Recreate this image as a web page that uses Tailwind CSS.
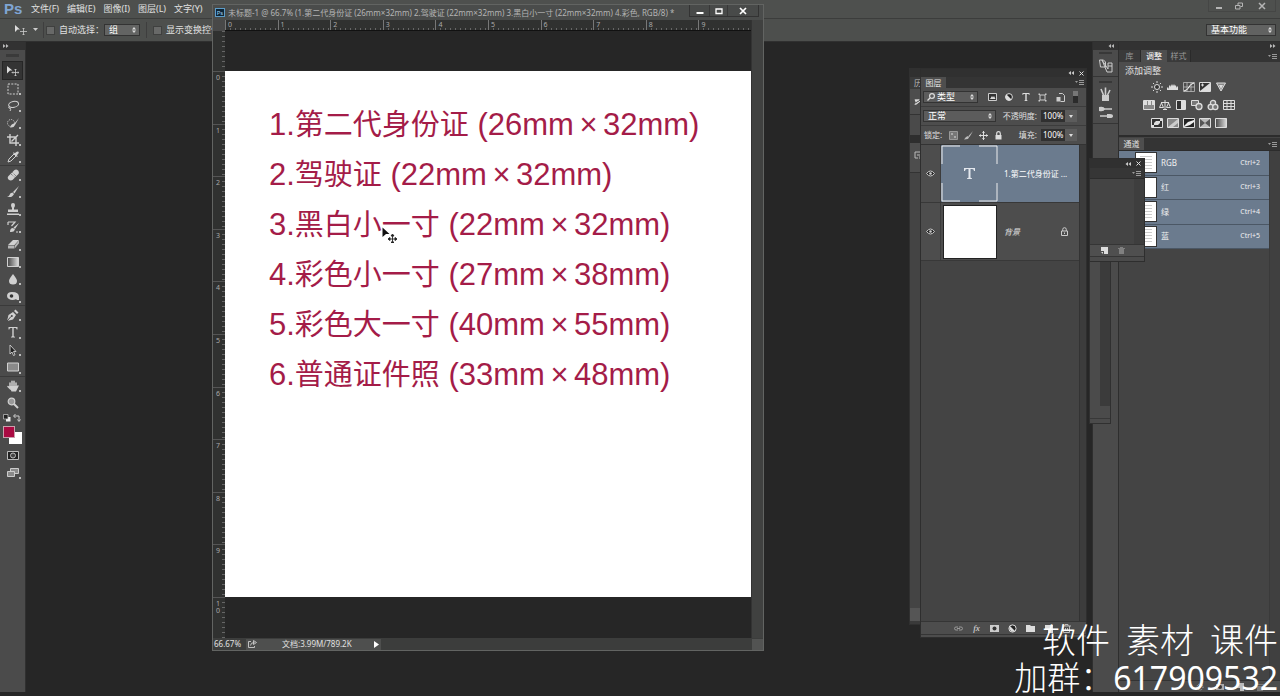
<!DOCTYPE html>
<html lang="zh-CN">
<head>
<meta charset="utf-8">
<title>Ps</title>
<script src="https://cdn.jsdelivr.net/npm/@tailwindcss/browser@4"></script>
</head>
<body class="h-screen overflow-hidden bg-[#262626] font-['Noto_Sans','Noto_Sans_CJK_SC',sans-serif] text-[9px] leading-3 text-[#e0e0e0]">
<div class="relative flex h-screen flex-col overflow-hidden">

  <!-- menu bar -->
  <header class="flex h-[18px] shrink-0 items-center bg-[#4e504e] pl-1">
    <span class="w-[27px] font-['Liberation_Sans',sans-serif] text-[15px] leading-4 font-bold text-[#7fa5d3]">Ps</span>
    <nav class="flex gap-2 whitespace-nowrap">
      <a href="#">文件(F)</a><a href="#">编辑(E)</a><a href="#">图像(I)</a><a href="#">图层(L)</a><a href="#">文字(Y)</a>
    </nav>
    <div class="mr-1 ml-auto flex h-3 self-start border border-t-0 border-[#454645] text-[#b5b5b5]">
      <button aria-label="最小化" class="flex w-5 items-center justify-center"><svg class="size-2" viewBox="0 0 8 8"><path d="M1 5h6v2H1z" fill="currentColor"/></svg></button>
      <button aria-label="还原" class="flex w-5 items-center justify-center"><svg class="size-2" viewBox="0 0 8 8" fill="none" stroke="currentColor"><path d="M3 3V1h4.500v3.500H5.500M.5 3.500h4.500v3.500H.5z"/></svg></button>
      <button aria-label="关闭" class="flex w-[26px] items-center justify-center"><svg class="size-2" viewBox="0 0 8 8" stroke="currentColor" stroke-width="1.500"><path d="M1 1l6 6M7 1L1 7"/></svg></button>
    </div>
  </header>

  <!-- options bar -->
  <div class="flex h-6 shrink-0 items-center border-y border-t-[#3c3d3c] border-b-[#303030] bg-[#4d4f4d] pl-[15px]">
    <svg class="h-3 w-3" viewBox="0 0 12 12"><path d="M0 1l5 4.500H2.500L0 8z" fill="#ddd"/><path d="M8.500 4v7M5 7.500h7M7.500 5l1-1 1 1M7.500 10l1 1 1-1" stroke="#ccc" stroke-width=".8" fill="none"/></svg>
    <svg class="ml-1.5 h-1 w-1.5" viewBox="0 0 6 4"><path d="M0 0h5L2.500 3z" fill="#ccc"/></svg>
    <i class="ml-1 h-4 w-px bg-[#3e3e3e]"></i>
    <label class="ml-0.5 flex items-center gap-1 whitespace-nowrap"><input type="checkbox" class="size-[9px] appearance-none border border-[#3f403f] bg-[#686968]">自动选择：</label>
    <div class="relative flex">
      <select aria-label="自动选择" class="h-3 w-9 appearance-none border border-[#333] bg-[#636463] pl-1 text-[9px] leading-[10px] text-white"><option>组</option></select>
      <svg class="absolute top-[3px] right-1 h-1.5 w-1" viewBox="0 0 4 6"><path d="M0 2.500L2 0l2 2.500zM0 3.500L2 6l2-2.500z" fill="#ddd"/></svg>
    </div>
    <i class="ml-1.5 h-4 w-px bg-[#3e3e3e]"></i>
    <label class="ml-1.5 flex items-center gap-1 whitespace-nowrap"><input type="checkbox" class="size-[9px] appearance-none border border-[#3f403f] bg-[#686968]">显示变换控件</label>
    <div class="relative mr-1 ml-auto flex">
      <select aria-label="工作区" class="h-3 w-[70px] appearance-none border border-[#333] bg-[#616261] pl-1 text-[9px] leading-[10px] text-white"><option>基本功能</option></select>
      <svg class="absolute top-[3px] right-1 h-1.5 w-1" viewBox="0 0 4 6"><path d="M0 2.500L2 0l2 2.500zM0 3.500L2 6l2-2.500z" fill="#ddd"/></svg>
    </div>
  </div>

  <!-- workspace -->
  <main class="flex min-h-0 flex-1">
    <!-- tools -->
    <aside class="mb-1 flex w-[26px] shrink-0 flex-col border-r border-[#303030] bg-[#4b4b4b]">
      <div class="flex h-2 items-center bg-[#323232] pl-[3px]"><svg class="h-1 w-1.5" viewBox="0 0 6 4" fill="#bbb"><path d="M0 0l2.500 2L0 4zM3 0l2.500 2L3 4z"/></svg></div>
      <div class="mx-1.5 my-1 h-[3px] bg-[#3a3a3a]"></div>
      <div class="flex h-[105px] shrink-0 flex-col border-b border-[#3a3a3a] text-[#d0d0d0] *:flex-1 *:bg-[radial-gradient(circle_at_20px_14px,#bbb_0_1px,transparent_1px)] *:pl-[7px]">
        <button aria-label="移动" class="mx-0.5 border border-[#262626] !bg-[#343434] !pl-1"><svg class="size-3" viewBox="0 0 12 12"><path d="M0 1l5.500 4.500H3L0 8.500z" fill="#ddd"/><path d="M8.500 4v7M5 7.500h7M7.500 5l1-1 1 1M7.500 10l1 1 1-1M6 6.500l-1 1 1 1M11 6.500l1 1-1 1" stroke="#ccc" stroke-width=".8" fill="none"/></svg></button>
        <button aria-label="选框"><svg class="size-3" viewBox="0 0 12 12"><path d="M1 1h10v10H1z" fill="none" stroke="currentColor" stroke-dasharray="2 1.300"/></svg></button>
        <button aria-label="套索"><svg class="size-3" viewBox="0 0 12 12" fill="none" stroke="currentColor"><ellipse cx="6.500" cy="4.500" rx="5" ry="3" transform="rotate(-12 6 4)"/><path d="M2 6.500q-1 2 1.500 2 .5 1-.5 2.500"/></svg></button>
        <button aria-label="快速选择"><svg class="size-3" viewBox="0 0 12 12"><circle cx="4" cy="6" r="3.500" fill="none" stroke="currentColor" stroke-dasharray="1 1"/><path d="M12 1L7 7l1 1zM7 6.500Q4 7 3 10.500q4 .5 5-2.500z" fill="currentColor"/></svg></button>
        <button aria-label="裁剪"><svg class="size-3" viewBox="0 0 12 12"><path d="M3 0v9h9M0 3h9v9M4.500 7.500L11 1" fill="none" stroke="currentColor" stroke-width="1.400"/></svg></button>
        <button aria-label="吸管"><svg class="size-3" viewBox="0 0 12 12"><path d="M1 11l1-3 5-5 2 2-5 5z" fill="none" stroke="currentColor"/><path d="M6 2l4 4 .8-.8-1-1Q12.500 2 11.500.8 10 0 7.800 2.200l-1-1z" fill="currentColor"/></svg></button>
      </div>
      <div class="flex h-[140px] shrink-0 flex-col border-b border-[#3a3a3a] text-[#d0d0d0] *:flex-1 *:bg-[radial-gradient(circle_at_20px_14px,#bbb_0_1px,transparent_1px)] *:pl-[7px]">
        <button aria-label="修复"><svg class="size-3" viewBox="0 0 12 12"><path d="M1.500 10.500q-1.500-2 0-3.500l6-6q2-1 3.500.5t.5 3.500l-6 6q-2 1-4-.5z" fill="currentColor"/><path d="M4 5l3.500 3M5.500 3.500L9 7" stroke="#666" stroke-dasharray="1 1"/></svg></button>
        <button aria-label="画笔"><svg class="size-3" viewBox="0 0 12 12"><path d="M12 0L6 6l1.500 1.500zM5.500 6.500Q3 6.500 2.500 9 2 10.500 0 10.500q5 2 7-2.500z" fill="currentColor"/></svg></button>
        <button aria-label="图章"><svg class="size-3" viewBox="0 0 12 12"><path d="M4 2q0-2 2-2t2 2q0 1.500-1 3v1.500h4V9H1V6.500h4V5Q4 3.500 4 2zM0 10.500h12V12H0z" fill="currentColor"/></svg></button>
        <button aria-label="历史画笔"><svg class="size-3" viewBox="0 0 12 12"><path d="M12 2L6.500 6.500 8 8zM6 7Q3 7 3 11q4 .5 5-2.500z" fill="currentColor"/><path d="M1 1h7L4.500 5M1 1v3M9 11h2" fill="none" stroke="currentColor" stroke-width="1.200"/></svg></button>
        <button aria-label="橡皮擦"><svg class="size-3" viewBox="0 0 12 12"><path d="M1 7l5-5h6L7.500 7z" fill="currentColor"/><path d="M1 7.500h6.500v3H1zM8 7.300l4-5v3l-4 5z" fill="#b4b4b4"/></svg></button>
        <button aria-label="渐变"><svg class="size-3" viewBox="0 0 12 12"><defs><linearGradient id="g1"><stop stop-color="#444"/><stop offset="1" stop-color="#ddd"/></linearGradient></defs><path d="M.5 1.500h11v9H.5z" fill="url(#g1)" stroke="currentColor"/></svg></button>
        <button aria-label="模糊"><svg class="size-3" viewBox="0 0 12 12"><path d="M6 1q4 5 4 7a4 3.500 0 0 1-8 0Q2 6 6 1z" fill="currentColor"/></svg></button>
        <button aria-label="减淡"><svg class="size-3" viewBox="0 0 12 12"><path d="M0 6q0-4 5-4 7 0 7 5v3H9.500V9Q5 11 2 9 0 8 0 6z" fill="currentColor"/><circle cx="4.500" cy="6" r="1.800" fill="#333"/></svg></button>
      </div>
      <div class="flex h-[71px] shrink-0 flex-col border-b border-[#3a3a3a] text-[#d0d0d0] *:flex-1 *:bg-[radial-gradient(circle_at_20px_14px,#bbb_0_1px,transparent_1px)] *:pl-[7px]">
        <button aria-label="钢笔"><svg class="size-3" viewBox="0 0 12 12"><path d="M0 12l1.500-6L6 3l3 3-3 4.500zM7 2l1.500-1.500 3 3L10 5z" fill="currentColor"/><path d="M0 12l4-4.500" stroke="#444"/><circle cx="4.800" cy="7" r="1" fill="#444"/></svg></button>
        <button aria-label="文字"><svg class="size-3" viewBox="0 0 12 12"><path d="M1.500 1h9v2.500h-.8Q9.500 2 8.500 2H6.700v8q0 .8 1.300.8v.7H4v-.7q1.300 0 1.300-.8V2H3.500q-1 0-1.200 1.500h-.8z" fill="currentColor"/></svg></button>
        <button aria-label="路径选择"><svg class="size-3" viewBox="0 0 12 12"><path d="M3 1v9l2-2 1.500 3.500 1.500-.7L6.500 7.500H9z" fill="#222" stroke="currentColor" stroke-width=".9"/></svg></button>
        <button aria-label="矩形"><svg class="size-3" viewBox="0 0 12 12"><path d="M.5 2h11v8H.5z" fill="#8a8a8a" stroke="currentColor"/></svg></button>
      </div>
      <div class="flex h-[35px] shrink-0 flex-col text-[#d0d0d0] *:flex-1 *:pl-[7px]">
        <button aria-label="抓手" class="bg-[radial-gradient(circle_at_20px_14px,#bbb_0_1px,transparent_1px)]"><svg class="size-3" viewBox="0 0 12 12"><path d="M3 7V3M5 6V1.300M7 6V1.300M9 7V3M3.500 9L1 6.500" stroke="currentColor" stroke-width="1.500" stroke-linecap="round"/><path d="M2.300 6h7.400l1.500-1 .5 1L9 11.500H4.500z" fill="currentColor"/></svg></button>
        <button aria-label="缩放"><svg class="size-3" viewBox="0 0 12 12"><circle cx="4.500" cy="4.500" r="3.300" fill="#999" stroke="currentColor" stroke-width="1.200"/><path d="M7 7l4 4" stroke="currentColor" stroke-width="2"/></svg></button>
      </div>
      <div class="flex h-3 shrink-0 items-center justify-between px-1 pl-[3px]">
        <svg class="size-2" viewBox="0 0 8 8"><path d="M3 3h4.500v4.500H3z" fill="#eee"/><path d="M.5.5H5V5H.5z" fill="#222" stroke="#ccc" stroke-width=".7"/></svg>
        <svg class="size-2" viewBox="0 0 8 8" fill="none" stroke="#ccc"><path d="M2.500 0L.5 2l2 2M1 2h5v5M4.500 5.500L6 7.500l1.500-2"/></svg>
      </div>
      <div class="grid h-[21px] shrink-0 grid-cols-[3px_6px_6px_7px] grid-rows-[2px_6px_6px_6px]">
        <button aria-label="背景色" class="col-start-3 col-end-5 row-start-3 row-end-5 bg-white"></button>
        <button aria-label="前景色" class="col-start-2 col-end-4 row-start-2 row-end-4 border border-[#c9a0ac] bg-[#aa0a42]"></button>
      </div>
      <button aria-label="快速蒙版" class="mt-0.5 flex h-[17px] shrink-0 items-center pl-[7px]"><svg class="h-[9px] w-3" viewBox="0 0 12 9"><path d="M.5.5h11v8H.5z" fill="#222" stroke="#bbb"/><circle cx="6" cy="4.500" r="2.500" fill="#444" stroke="#bbb"/></svg></button>
      <button aria-label="屏幕模式" class="flex h-[17px] shrink-0 items-center bg-[radial-gradient(circle_at_20px_14px,#bbb_0_1px,transparent_1px)] pl-[7px]"><svg class="h-[9px] w-3" viewBox="0 0 12 9" fill="#8a8a8a" stroke="#ccc"><path d="M3.500.5h8v5h-8z"/><path d="M.5 3.500h7v5h-7z"/></svg></button>
    </aside>

    <div class="flex-1"></div>

    <!-- collapsed icon dock -->
    <aside class="mb-1 flex w-[27px] shrink-0 flex-col border-x border-[#2e2e2e] bg-[#4b4b4b]">
      <div class="flex h-2 shrink-0 items-center justify-end bg-[#323232] pr-1"><svg class="h-1 w-1.5" viewBox="0 0 6 4" fill="#bbb"><path d="M3 0v4L.5 2zM6 0v4L3.500 2z"/></svg></div>
      <div class="mx-1.5 my-0.5 h-0.5 bg-[#383838]"></div>
      <button aria-label="历史记录" class="flex h-[21px] shrink-0 items-center justify-center border-b border-[#353535]"><svg class="size-4" viewBox="0 0 16 16" fill="none" stroke="#ccc"><path d="M1.500 2h4l2 2v5h-5zM4 2l6 9V5h4v9H9z"/><path d="M10 8h4"/></svg></button>
      <div class="mx-1.5 mt-1 mb-0.5 h-0.5 shrink-0 bg-[#383838]"></div>
      <button aria-label="画笔预设" class="flex h-[18px] shrink-0 items-center justify-center"><svg class="size-4" viewBox="0 0 16 16"><path d="M4 9h7v6H4z" fill="#ccc"/><path d="M5.500 9L3 3M7.500 9V1.500M9.500 9L12 4" stroke="#ccc" stroke-width="1.600"/></svg></button>
      <button aria-label="画笔" class="flex h-[21px] shrink-0 items-center justify-center border-b border-[#353535]"><svg class="size-4" viewBox="0 0 16 16"><path d="M1 4h13M2 11h9" stroke="#ccc" stroke-width="1.400"/><path d="M1 2q5-1 6 2-1 3-6 2zM9 9h3q3 0 3 2t-3 2H9z" fill="#ccc"/></svg></button>
    </aside>

    <!-- right panels -->
    <aside class="mb-1 flex w-[161px] shrink-0 flex-col bg-[#444]">
      <div class="flex h-2 shrink-0 items-center justify-end bg-[#323232] pr-1"><svg class="h-1 w-1.5" viewBox="0 0 6 4" fill="#bbb"><path d="M0 0l2.500 2L0 4zM3 0l2.500 2L3 4z"/></svg></div>
      <div class="flex h-3 shrink-0 items-center bg-[#343434] text-[8px] text-[#999]">
        <button class="h-3 w-[22px] border-r border-[#2a2a2a] bg-[#3a3a3a]">库</button>
        <button class="h-3 w-[26px] bg-[#4e4e4e] text-white">调整</button>
        <button class="h-3 w-6 border-r border-[#2a2a2a] bg-[#3a3a3a]">样式</button>
        <svg class="mr-[3px] ml-auto h-[5px] w-[9px]" viewBox="0 0 9 5"><path d="M0 1h3L1.500 3zM4 0h5v1H4zM4 2h5v1H4zM4 4h5v1H4z" fill="#999"/></svg>
      </div>
      <section class="flex h-[75px] shrink-0 flex-col items-center border-b-2 border-[#2c2c2c] bg-[#4d4d4d] pt-[3px]">
        <h2 class="self-start pl-[6px] text-[9px]">添加调整</h2>
        <div class="flex gap-1 pt-1 pr-[21px] *:size-3">
          <svg viewBox="0 0 12 12" stroke="#ddd"><circle cx="6" cy="6" r="2.500" fill="#333"/><path d="M6 0v2M6 10v2M0 6h2M10 6h2M2 2l1.200 1.200M8.800 8.800L10 10M10 2L8.800 3.200M3.200 8.800L2 10"/></svg>
          <svg viewBox="0 0 12 12"><path d="M0 9V7l1-1 1 2V5l1-1 1 2V3l1 2 1-2 1 2V3l1 2 1-1v3l1-2 1 1v3z" fill="#ddd"/></svg>
          <svg viewBox="0 0 12 12" fill="none" stroke="#ccc"><path d="M.5 1.500h11v9H.5zM.5 6h11M4 1.500v9M8 1.500v9" stroke-width=".7"/><path d="M1 10Q5 9 6 6t5-4" stroke="#fff"/></svg>
          <svg viewBox="0 0 12 12"><path d="M.5 1.500h11v9H.5z" fill="#333" stroke="#ddd"/><path d="M1 10l10-8v8z" fill="#ddd"/><path d="M2 4h3M3.500 2.500v3" stroke="#ddd"/></svg>
          <svg viewBox="0 0 12 12"><path d="M1.500 2h9L6 10z" fill="#888" stroke="#ddd"/><path d="M4 4h4L6 8z" fill="#ddd"/></svg>
        </div>
        <div class="flex gap-1 pt-[6px] pr-[21px] *:size-3">
          <svg viewBox="0 0 12 12"><path d="M.5 1.500h11v9H.5z" fill="#888" stroke="#ddd"/><path d="M1 2h3v4H1zM5 2h3v4H5zM9 2h2v4H9z" fill="#ddd"/></svg>
          <svg viewBox="0 0 12 12" fill="none" stroke="#ddd"><path d="M6 1v2M2 3.500h8M2.500 4L.5 8.500h4zM9.500 4l-2 4.500h4zM6 3v7M4 10.500h4"/></svg>
          <svg viewBox="0 0 12 12"><path d="M1.500 1.500h9v9h-9z" fill="#333" stroke="#ddd"/><path d="M6 2h4v8H6z" fill="#ddd"/></svg>
          <svg viewBox="0 0 12 12"><path d="M.5 1.500h7v5h-7z" fill="#777" stroke="#ddd"/><circle cx="8" cy="7.500" r="3" fill="#777" stroke="#ddd" stroke-width="1.300"/></svg>
          <svg viewBox="0 0 12 12" fill="#777" stroke="#ddd" stroke-width="1.300"><circle cx="6" cy="4" r="2.600"/><circle cx="3.700" cy="8" r="2.600"/><circle cx="8.300" cy="8" r="2.600"/></svg>
          <svg viewBox="0 0 12 12" fill="none" stroke="#ddd"><path d="M.5 1.500h11v9H.5zM.5 4.500h11M.5 7.500h11M4 1.500v9M8 1.500v9"/></svg>
        </div>
        <div class="flex gap-1 pt-[6px] pr-[21px] *:size-3">
          <svg viewBox="0 0 12 12"><path d="M.5 1.500h11v9H.5z" fill="#333" stroke="#ddd"/><path d="M1 10h2V6l2-2h6V2H9v4L7 8H1z" fill="#ddd"/></svg>
          <svg viewBox="0 0 12 12"><path d="M.5 1.500h11v9H.5z" fill="#888" stroke="#ddd"/><path d="M1 10l10-8v4L6 10z" fill="#ccc"/></svg>
          <svg viewBox="0 0 12 12"><path d="M.5 1.500h11v9H.5z" fill="#222" stroke="#ddd"/><path d="M1 9l4-4 6-2v2L7 8l-6 2z" fill="#eee"/></svg>
          <svg viewBox="0 0 12 12"><path d="M.5 1.500h11v9H.5z" fill="#555" stroke="#ddd"/><path d="M1 2l5 4 5-4zM1 10l5-4 5 4z" fill="#bbb"/></svg>
          <svg viewBox="0 0 12 12"><path d="M.5 1.500h11v9H.5z" fill="url(#g1)" stroke="#ddd"/></svg>
        </div>
      </section>
      <div class="mt-px flex h-[13px] shrink-0 items-center border-b border-[#2c2c2c] bg-[#343434] text-[8px]">
        <button class="h-3 w-[25px] bg-[#4e4e4e]">通道</button>
        <svg class="mr-[3px] ml-auto h-[5px] w-[9px]" viewBox="0 0 9 5"><path d="M0 1h3L1.500 3zM4 0h5v1H4zM4 2h5v1H4zM4 4h5v1H4z" fill="#999"/></svg>
      </div>
      <div class="flex min-h-0 flex-1">
        <div class="flex-1">
          <ul class="grid h-[98px] grid-rows-4 text-[8px] text-[#f0f0f0] *:flex *:items-center *:border-b *:border-[#4b5765] *:bg-[#6b7b8e] *:pr-[9px] *:pl-4">
            <li><i class="flex h-[21px] w-[22px] border border-[#333] bg-white bg-[repeating-linear-gradient(#ccc_0_1px,#fff_1px_3px)] bg-[length:12px_14px] bg-center bg-no-repeat"></i><b class="ml-1 font-normal">RGB</b><span class="ml-auto text-[7px]">Ctrl+2</span></li>
            <li><i class="flex h-[21px] w-[22px] border border-[#333] bg-white"></i><b class="ml-1 font-normal">红</b><span class="ml-auto text-[7px]">Ctrl+3</span></li>
            <li><i class="flex h-[21px] w-[22px] border border-[#333] bg-white bg-[repeating-linear-gradient(#ccc_0_1px,#fff_1px_3px)] bg-[length:12px_14px] bg-center bg-no-repeat"></i><b class="ml-1 font-normal">绿</b><span class="ml-auto text-[7px]">Ctrl+4</span></li>
            <li><i class="flex h-[21px] w-[22px] border border-[#333] bg-white bg-[repeating-linear-gradient(#ccc_0_1px,#fff_1px_3px)] bg-[length:12px_14px] bg-center bg-no-repeat"></i><b class="ml-1 font-normal">蓝</b><span class="ml-auto text-[7px]">Ctrl+5</span></li>
          </ul>
        </div>
        <div class="w-[11px] border-l border-[#3a3a3a] bg-[#404040]"></div>
      </div>
      <div class="flex h-3 shrink-0 items-center justify-end gap-3 border-t border-[#333] bg-[#4c4c4c] pr-4 *:size-2">
        <svg viewBox="0 0 8 8"><circle cx="4" cy="4" r="3" fill="none" stroke="#bbb" stroke-dasharray="1 1"/></svg>
        <svg viewBox="0 0 8 8"><path d="M0 1h8v6H0z" fill="#aaa"/><circle cx="4" cy="4" r="2" fill="#333"/></svg>
        <svg viewBox="0 0 8 8"><path d="M1 0h7v8H4V5H1z" fill="#bbb"/></svg>
        <svg viewBox="0 0 8 8"><path d="M0 1h8v1H0zM1 3h6v5H1z" fill="#777"/></svg>
      </div>
    </aside>
  </main>

  <!-- document window -->
  <section class="absolute top-1 left-[212px] flex h-[647px] w-[552px] flex-col border border-[#626462] bg-[#454645]">
    <div class="flex h-[15px] shrink-0 items-center bg-[#4a4c4b] pl-0.5">
      <span class="flex h-[9px] w-[10px] items-center justify-center border border-[#5d9cc7] bg-[#0d2538] text-[6px] leading-none text-[#9fd2f5]">Ps</span>
      <h1 class="ml-[3px] text-[8px] whitespace-nowrap text-[#b4b4b4]">未标题-1 @ 66.7% (1.第二代身份证 (26mm×32mm) 2.驾驶证 (22mm×32mm) 3.黑白小一寸 (22mm×32mm) 4.彩色, RGB/8) *</h1>
      <div class="mr-1 ml-auto flex h-3 self-start border border-t-0 border-[#333] bg-[#484a49] text-white">
        <button aria-label="最小化" class="flex w-5 items-center justify-center border-r border-[#383838]"><svg class="size-2" viewBox="0 0 8 8"><path d="M.5 5h7v2h-7z" fill="currentColor"/></svg></button>
        <button aria-label="最大化" class="flex w-[18px] items-center justify-center border-r border-[#383838]"><svg class="size-2" viewBox="0 0 8 8"><path d="M1 2h6v4.500H1z" fill="none" stroke="currentColor" stroke-width="1.300"/></svg></button>
        <button aria-label="关闭" class="flex w-[30px] items-center justify-center"><svg class="size-2" viewBox="0 0 8 8" stroke="currentColor" stroke-width="1.700"><path d="M1 1l6 6M7 1L1 7"/></svg></button>
      </div>
    </div>
    <div class="flex min-h-0 flex-1">
      <!-- vertical ruler -->
      <div class="flex w-3 shrink-0 flex-col bg-[#303130] text-[7px] leading-[7px] text-[#aaa]">
        <div class="h-[11px] shrink-0 bg-[#484848]"></div>
        <div class="h-10 shrink-0 bg-[repeating-linear-gradient(0deg,transparent_0_4px,#666_4px_5px)] bg-[length:3px_100%] bg-right bg-no-repeat"></div>
        <div class="grid h-[526px] shrink-0 grid-rows-10 *:border-t *:border-[#555] *:bg-[repeating-linear-gradient(transparent_0_4px,#666_4px_5px)] *:bg-[length:3px_50px] *:bg-right-top *:bg-no-repeat *:pt-0.5 *:pl-[3px]">
          <span>0</span><span>1</span><span>2</span><span>3</span><span>4</span><span>5</span><span>6</span><span>7</span><span>8</span><span>9</span>
        </div>
        <div class="flex-1 border-t border-[#555] bg-[repeating-linear-gradient(transparent_0_4px,#666_4px_5px)] bg-[length:3px_100%] bg-right bg-no-repeat pt-0.5 pl-[3px]">1<br>0</div>
      </div>
      <div class="flex flex-1 flex-col">
        <!-- horizontal ruler -->
        <div class="grid h-[11px] shrink-0 grid-cols-10 border-b border-[#111] bg-[#303130] text-[7px] leading-[9px] text-[#aaa] *:border-l *:border-[#777] *:bg-[repeating-linear-gradient(90deg,transparent_0_4px,#666_4px_5px)] *:bg-[length:50px_2px] *:bg-left-bottom *:bg-no-repeat *:pl-0.5">
          <span>0</span><span>1</span><span>2</span><span>3</span><span>4</span><span>5</span><span>6</span><span>7</span><span>8</span><span>9</span>
        </div>
        <div class="flex flex-1 flex-col bg-[#262626] pt-10">
          <div class="h-[526px] bg-white pt-[29px] pl-11 font-['Liberation_Sans','Noto_Sans_CJK_SC',sans-serif] text-[31px] leading-[50px] whitespace-nowrap text-[#a41c48]">
            <p>1.<span class="text-[29px]">第二代身份证</span> (26mm<span class="inline-block w-[29px] text-center">×</span>32mm)</p>
            <p>2.<span class="text-[29px]">驾驶证</span> (22mm<span class="inline-block w-[29px] text-center">×</span>32mm)</p>
            <p>3.<span class="text-[29px]">黑白小一寸</span> (22mm<span class="inline-block w-[29px] text-center">×</span>32mm)</p>
            <p>4.<span class="text-[29px]">彩色小一寸</span> (27mm<span class="inline-block w-[29px] text-center">×</span>38mm)</p>
            <p>5.<span class="text-[29px]">彩色大一寸</span> (40mm<span class="inline-block w-[29px] text-center">×</span>55mm)</p>
            <p>6.<span class="text-[29px]">普通证件照</span> (33mm<span class="inline-block w-[29px] text-center">×</span>48mm)</p>
          </div>
        </div>
      </div>
      <div class="w-3 shrink-0 border-l border-[#333] bg-[#404140]"></div>
    </div>
    <footer class="flex h-3 shrink-0 items-center bg-[#3c3d3c] text-[8px] whitespace-nowrap">
      <span class="w-[33px] pl-px">66.67%</span>
      <div class="flex h-[11px] w-[135px] items-center bg-[#4e4f4e] pr-0.5 pl-0.5">
        <svg class="h-2 w-[9px]" viewBox="0 0 9 8" fill="none" stroke="#ccc"><path d="M3 1.500H.5v6h6V6M2.500 5.500q0-3 4-3M5.500.5l3 2-3 2z" stroke-width=".9"/></svg>
        <span class="ml-[25px]">文档:3.99M/789.2K</span>
        <button aria-label="更多" class="ml-auto"><svg class="h-[7px] w-[5px]" viewBox="0 0 5 7"><path d="M0 0l5 3.500L0 7z" fill="#fff"/></svg></button>
      </div>
      <div class="ml-auto size-[11px] bg-[#525352]"></div>
    </footer>
  </section>

  <!-- mouse pointer -->
  <svg class="absolute top-[227px] left-[382px] size-4" viewBox="0 0 16 16"><path d="M.5.500l7 6.500H4L.5 10z" fill="#111"/><path d="M10.500 8v8M6.500 12h8M9 9l1.500-2L12 9zM9 15l1.500 1.500L12 15zM8 10.500L6 12l2 1.500zM13 10.500l2 1.500-2 1.500z" fill="#222" stroke="#222" stroke-width=".9"/></svg>

  <!-- narrow panel behind the layers panel -->
  <section class="absolute top-[68px] right-[359px] flex h-[557px] w-3 flex-col overflow-hidden border border-[#303030] bg-[#444] text-[8px] text-[#bbb]">
    <div class="h-2 shrink-0 bg-[#303030]"></div>
    <div class="h-3 shrink-0 bg-[#3a3a3a] pl-1 whitespace-nowrap">历</div>
    <div class="flex h-[26px] shrink-0 items-center border-b border-[#333] bg-[#4d4d4d] pl-1"><svg class="size-2" viewBox="0 0 8 8"><path d="M1 1h6L2 4M8 3L3 7H1z" stroke="#ddd" fill="#ddd"/></svg></div>
    <div class="h-7 shrink-0 border-b-[8px] border-[#2e2e2e] bg-[#4a4a4a]"></div>
    <div class="h-[30px] shrink-0 border-b border-[#333] bg-[#4d4d4d] pt-2 pl-1"><svg class="size-2" viewBox="0 0 8 8" fill="none" stroke="#bbb"><path d="M1 1h7M1 1v6h3M3 4h5M6 5v3h2"/></svg></div>
    <div class="mt-auto h-4 shrink-0 border-b-[3px] border-[#3a3a3a] bg-[#555]"></div>
  </section>

  <!-- layers panel -->
  <section class="absolute top-[68px] right-[193px] flex h-[570px] w-[167px] flex-col border border-[#2e2e2e] bg-[#444]">
    <div class="flex h-2 shrink-0 items-center justify-end gap-[5px] bg-[#303030] pr-0.5">
      <svg class="h-1 w-1.5" viewBox="0 0 6 4" fill="#ccc"><path d="M3 0v4L.5 2zM6 0v4L3.500 2z"/></svg>
      <svg class="size-[5px]" viewBox="0 0 5 5" stroke="#ddd"><path d="M.5.500l4 4M4.500.500l-4 4"/></svg>
    </div>
    <div class="flex h-[11px] shrink-0 items-center bg-[#343434] text-[8px]">
      <button class="h-[11px] w-[25px] bg-[#4e4e4e] leading-[11px]">图层</button>
      <svg class="mr-0.5 ml-auto h-[5px] w-[9px]" viewBox="0 0 9 5"><path d="M0 1h3L1.500 3zM4 0h5v1H4zM4 2h5v1H4zM4 4h5v1H4z" fill="#999"/></svg>
    </div>
    <div class="flex h-[18px] shrink-0 items-center bg-[#4d4d4d] pr-2 pl-0.5">
      <div class="relative flex">
        <select aria-label="筛选" class="h-3 w-[55px] appearance-none border border-[#333] bg-[#5c5c5c] pl-[13px] text-[9px] leading-[10px] text-white"><option>类型</option></select>
        <svg class="absolute top-0.5 left-1 size-2" viewBox="0 0 8 8" fill="none" stroke="#ddd" stroke-width="1.200"><circle cx="5" cy="3" r="2.400"/><path d="M3 5L.5 7.500"/></svg>
        <svg class="absolute top-[3px] right-1 h-1.5 w-1" viewBox="0 0 4 6"><path d="M0 2.500L2 0l2 2.500zM0 3.500L2 6l2-2.500z" fill="#ddd"/></svg>
      </div>
      <div class="ml-[10px] flex flex-1 items-center justify-between">
        <button aria-label="像素"><svg class="h-2 w-[9px]" viewBox="0 0 9 8"><path d="M.5.500h8v7h-8z" fill="#333" stroke="#ccc"/><path d="M2 6l2-3 1 1.500L6 3l1.500 3z" fill="#ddd"/></svg></button>
        <button aria-label="调整"><svg class="size-2" viewBox="0 0 8 8"><circle cx="4" cy="4" r="3.400" fill="#222" stroke="#ddd"/><path d="M1.500 1.500a3.400 3.400 0 0 0 5 5z" fill="#ddd"/></svg></button>
        <button aria-label="文字"><svg class="size-2" viewBox="0 0 8 8"><path d="M.5 0h7v2H7L6.500 1H4.700v6l.8.500V8h-3v-.5l.8-.5V1H1.500L1 2H.5z" fill="#ddd"/></svg></button>
        <button aria-label="形状"><svg class="size-[9px]" viewBox="0 0 9 9" fill="#4d4d4d" stroke="#ccc"><path d="M2 2h5v5H2z"/><path d="M.5.500h1.500v1.500H.5zM7 .5h1.500v1.500H7zM.5 7h1.500v1.500H.5zM7 7h1.500v1.500H7z" fill="#ccc" stroke="none"/></svg></button>
        <button aria-label="智能对象"><svg class="size-[9px]" viewBox="0 0 9 9"><path d="M3 .5h3.500l2 2v6h-4" fill="none" stroke="#ccc"/><path d="M.5 4h4v4.500h-4z" fill="#ccc"/></svg></button>
        <button aria-label="筛选开关" class="flex h-3 w-[5px] flex-col bg-[#2b2b2b]"><i class="h-[5px] w-full bg-[#777]"></i></button>
      </div>
    </div>
    <div class="flex h-[19px] shrink-0 items-center border-t border-[#3c3c3c] bg-[#4d4d4d] pr-[9px] pl-0.5 whitespace-nowrap">
      <div class="relative mr-auto flex">
        <select aria-label="混合模式" class="h-3 w-[73px] appearance-none border border-[#333] bg-[#5c5c5c] pl-1 text-[9px] leading-[10px] text-white"><option>正常</option></select>
        <svg class="absolute top-[3px] right-1 h-1.5 w-1" viewBox="0 0 4 6"><path d="M0 2.500L2 0l2 2.500zM0 3.500L2 6l2-2.500z" fill="#ddd"/></svg>
      </div>
      <label for="op" class="text-[8px]">不透明度:</label>
      <input id="op" value="100%" class="ml-1 h-3 w-6 bg-[#303030] pl-0.5 text-[8px] text-white">
      <button aria-label="不透明度" class="flex h-3 w-3 items-center justify-center bg-[#5c5c5c]"><svg class="h-[3px] w-1" viewBox="0 0 4 3"><path d="M0 0h4L2 3z" fill="#ddd"/></svg></button>
    </div>
    <div class="flex h-[19px] shrink-0 items-center border-t border-[#3c3c3c] bg-[#4d4d4d] pr-[9px] pl-[3px] whitespace-nowrap">
      <span class="text-[8px]">锁定:</span>
      <div class="ml-[7px] flex gap-[6px]">
        <svg class="size-[9px]" viewBox="0 0 9 9"><path d="M.5.500h8v8h-8z" fill="#777" stroke="#999"/><path d="M2 2h2v2H2zM5 5h2v2H5z" fill="#aaa"/></svg>
        <svg class="size-[9px]" viewBox="0 0 9 9"><path d="M9 0L4.500 5l1 1zM4 5Q2 5 0 8.500q5 0 5-2.500z" fill="#bbb"/></svg>
        <svg class="size-[9px]" viewBox="0 0 9 9"><path d="M4.500 0v9M0 4.500h9" stroke="#ddd"/><path d="M3 2l1.500-2L6 2zM3 7l1.500 2L6 7zM2 3L0 4.500 2 6zM7 3l2 1.500L7 6z" fill="#ddd"/></svg>
        <svg class="size-[9px]" viewBox="0 0 9 9"><path d="M1.500 4h6v4.500h-6z" fill="#ddd"/><path d="M2.700 4V2.500q0-1.800 1.800-1.800t1.800 1.800V4" fill="none" stroke="#ddd" stroke-width="1.200"/></svg>
      </div>
      <label for="fl" class="ml-auto text-[8px]">填充:</label>
      <input id="fl" value="100%" class="ml-1 h-3 w-6 bg-[#303030] pl-0.5 text-[8px] text-white">
      <button aria-label="填充" class="flex h-3 w-3 items-center justify-center bg-[#5c5c5c]"><svg class="h-[3px] w-1" viewBox="0 0 4 3"><path d="M0 0h4L2 3z" fill="#ddd"/></svg></button>
    </div>
    <div class="flex min-h-0 flex-1 border-t border-[#333]">
      <ul class="flex-1 text-[8px]">
        <li class="flex h-[58px] border-b border-[#383838] bg-[#4d4d4d]">
          <button aria-label="可见" class="flex w-5 items-center justify-center border-r border-[#3c3c3c]"><svg class="h-[7px] w-[9px]" viewBox="0 0 9 7"><path d="M.5 3.500q4-5 8 0-4 5-8 0z" fill="#222" stroke="#ccc"/><circle cx="4.500" cy="3.500" r="1.300" fill="#ccc"/></svg></button>
          <div class="flex flex-1 items-center bg-[#6b7b8e] text-white">
            <svg class="h-[57px] w-[57px]" viewBox="0 0 57 57"><path d="M1 19V1h18M38 1h18v18M56 38v18H38M19 56H1V38" fill="none" stroke="#eee"/><path d="M23 23h11v3h-1q0-2-2-2h-1.500v8.500q0 .8 1.500.8v.7h-5v-.7q1.500 0 1.500-.8V24H26q-2 0-2 2h-1z" fill="#e4e8ee"/></svg>
            <span class="ml-[6px]">1.第二代身份证 ...</span>
          </div>
        </li>
        <li class="flex h-[58px] border-b border-[#383838] bg-[#4d4d4d]">
          <button aria-label="可见" class="flex w-5 items-center justify-center border-r border-[#3c3c3c]"><svg class="h-[7px] w-[9px]" viewBox="0 0 9 7"><path d="M.5 3.500q4-5 8 0-4 5-8 0z" fill="#222" stroke="#ccc"/><circle cx="4.500" cy="3.500" r="1.300" fill="#ccc"/></svg></button>
          <div class="flex flex-1 items-center pr-[10px] pl-0.5">
            <i class="h-[54px] w-[54px] border border-[#222] bg-white"></i>
            <em class="ml-[7px]">背景</em>
            <svg class="ml-auto size-[9px]" viewBox="0 0 9 9" fill="none" stroke="#ccc"><path d="M1.500 4h6v4.500h-6zM2.700 4V2.500q0-1.800 1.800-1.800t1.800 1.800V4M4.500 5.500v1.500"/></svg>
          </div>
        </li>
      </ul>
      <div class="w-[7px] border-l border-[#333] bg-[#3c3c3c]"></div>
    </div>
    <div class="flex h-[13px] shrink-0 items-center gap-[9px] border-t border-[#353535] bg-[#4d4d4d] pl-[33px] *:h-[9px] *:w-[9px]">
      <svg viewBox="0 0 9 9" fill="none" stroke="#999"><path d="M4 3H2Q.5 3 .5 4.500T2 6h2M5 3h2q1.500 0 1.500 1.500T7 6H5M3 4.500h3"/></svg>
      <button aria-label="图层样式" class="text-[9px] leading-[9px] italic font-['Liberation_Serif',serif]">fx</button>
      <svg viewBox="0 0 9 9"><path d="M0 1h9v7H0z" fill="#ccc"/><circle cx="4.500" cy="4.500" r="2" fill="#333"/></svg>
      <svg viewBox="0 0 9 9"><circle cx="4.500" cy="4.500" r="3.600" fill="#222" stroke="#ddd"/><path d="M2 2a3.600 3.600 0 0 0 5 5z" fill="#ddd"/></svg>
      <svg viewBox="0 0 9 9"><path d="M0 1h4l1 1h4v6H0z" fill="#ddd"/></svg>
      <svg viewBox="0 0 9 9"><path d="M1 1h8v8H4V6H1z" fill="#ddd"/></svg>
      <svg viewBox="0 0 9 9" fill="none" stroke="#bbb"><path d="M0 2h9M3 2V.5h3V2M1.500 2v6.500h6V2M3.500 4v3M5.500 4v3"/></svg>
    </div>
    <div class="h-[3px] shrink-0 border-t border-[#353535] bg-[#4d4d4d]"></div>
  </section>

  <!-- floating scroll panel -->
  <section class="absolute top-[261px] right-[169px] flex h-[163px] w-[22px] flex-col border border-[#303030] bg-[#4b4b4b]">
    <div class="ml-auto w-2.5 flex-1 bg-[#3b3b3b]"></div>
    <div class="h-[13px] border-b border-[#383838]"></div>
    <div class="h-1"></div>
  </section>

  <!-- floating empty panel -->
  <section class="absolute top-[158px] right-[135px] flex h-[104px] w-[56px] flex-col border border-[#2e2e2e] bg-[#444]">
    <div class="flex h-[9px] items-center justify-end gap-[5px] bg-[#303030] pr-[3px]">
      <svg class="h-1 w-1.5" viewBox="0 0 6 4" fill="#ccc"><path d="M3 0v4L.5 2zM6 0v4L3.500 2z"/></svg>
      <svg class="size-[5px]" viewBox="0 0 5 5" stroke="#ddd"><path d="M.5.500l4 4M4.500.500l-4 4"/></svg>
    </div>
    <div class="flex h-[11px] items-center justify-end border-b border-[#2c2c2c] bg-[#363636] pr-[3px]"><svg class="h-[5px] w-[9px]" viewBox="0 0 9 5"><path d="M0 1h3L1.500 3zM4 0h5v1H4zM4 2h5v1H4zM4 4h5v1H4z" fill="#999"/></svg></div>
    <div class="flex flex-1"><div class="ml-auto w-2.5 bg-[#3e3e3e]"></div></div>
    <div class="flex h-[13px] items-center gap-[10px] border-y border-[#353535] bg-[#4f4f4f] pl-[11px]">
      <svg class="size-[7px]" viewBox="0 0 7 7"><path d="M0 0h7v7H3V4H0zM0 5h2v2z" fill="#ddd"/></svg>
      <svg class="size-[7px]" viewBox="0 0 7 7"><path d="M0 1h7v1H0zM1 2h5v5H1zM2 0h3v1H2z" fill="#808080"/></svg>
    </div>
    <div class="h-1 bg-[#4b4b4b]"></div>
  </section>

  <!-- contact overlay -->
  <div class="absolute right-0.5 bottom-0 flex flex-col items-end text-[33px] leading-[37px] font-light whitespace-nowrap text-white">
    <p class="flex gap-4 text-[34px]"><span>软件</span><span>素材</span><span>课件</span></p>
    <p class="flex"><span>加群：</span><span class="text-[32px] font-normal">617909532</span></p>
  </div>
</div>
</body>
</html>
